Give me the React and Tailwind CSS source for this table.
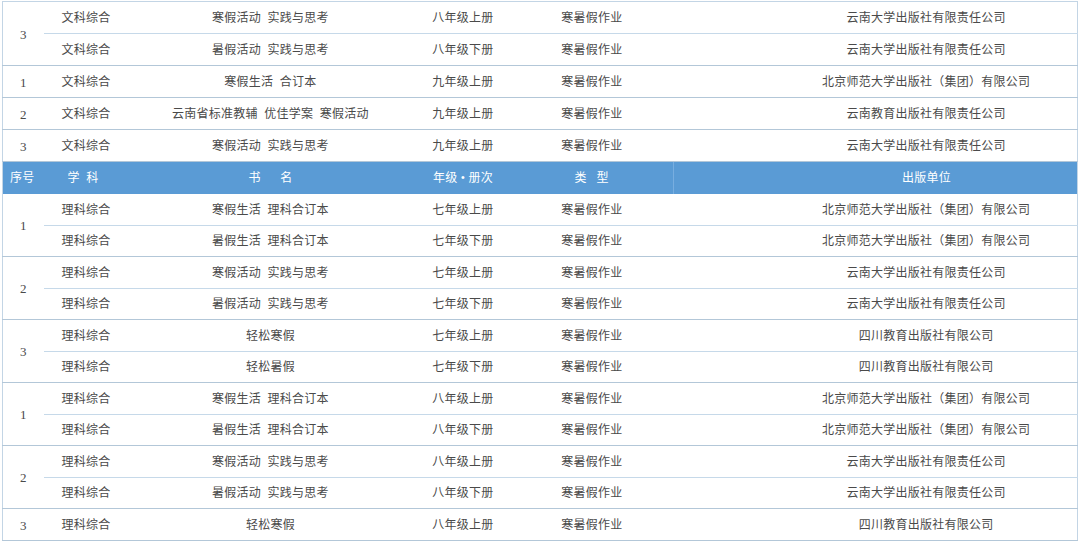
import React from "react";

const top = [
  { no: "3", rows: [
    ["文科综合", "寒假活动  实践与思考", "八年级上册", "寒暑假作业", "云南大学出版社有限责任公司"],
    ["文科综合", "暑假活动  实践与思考", "八年级下册", "寒暑假作业", "云南大学出版社有限责任公司"],
  ]},
  { no: "1", rows: [["文科综合", "寒假生活  合订本", "九年级上册", "寒暑假作业", "北京师范大学出版社（集团）有限公司"]] },
  { no: "2", rows: [["文科综合", "云南省标准教辅  优佳学案  寒假活动", "九年级上册", "寒暑假作业", "云南教育出版社有限责任公司"]] },
  { no: "3", rows: [["文科综合", "寒假活动  实践与思考", "九年级上册", "寒暑假作业", "云南大学出版社有限责任公司"]] },
];

const bottom = [
  { no: "1", rows: [
    ["理科综合", "寒假生活  理科合订本", "七年级上册", "寒暑假作业", "北京师范大学出版社（集团）有限公司"],
    ["理科综合", "暑假生活  理科合订本", "七年级下册", "寒暑假作业", "北京师范大学出版社（集团）有限公司"],
  ]},
  { no: "2", rows: [
    ["理科综合", "寒假活动  实践与思考", "七年级上册", "寒暑假作业", "云南大学出版社有限责任公司"],
    ["理科综合", "暑假活动  实践与思考", "七年级下册", "寒暑假作业", "云南大学出版社有限责任公司"],
  ]},
  { no: "3", rows: [
    ["理科综合", "轻松寒假", "七年级上册", "寒暑假作业", "四川教育出版社有限公司"],
    ["理科综合", "轻松暑假", "七年级下册", "寒暑假作业", "四川教育出版社有限公司"],
  ]},
  { no: "1", rows: [
    ["理科综合", "寒假生活  理科合订本", "八年级上册", "寒暑假作业", "北京师范大学出版社（集团）有限公司"],
    ["理科综合", "暑假生活  理科合订本", "八年级下册", "寒暑假作业", "北京师范大学出版社（集团）有限公司"],
  ]},
  { no: "2", rows: [
    ["理科综合", "寒假活动  实践与思考", "八年级上册", "寒暑假作业", "云南大学出版社有限责任公司"],
    ["理科综合", "暑假活动  实践与思考", "八年级下册", "寒暑假作业", "云南大学出版社有限责任公司"],
  ]},
  { no: "3", rows: [["理科综合", "轻松寒假", "八年级上册", "寒暑假作业", "四川教育出版社有限公司"]] },
];

const font = { fontFamily: '"Liberation Serif", "Noto Sans CJK SC", serif' };

function Group({ group, h }) {
  return group.rows.map((r, i) => {
    const last = i === group.rows.length - 1;
    const line = last ? "border-b border-[#b3c7d8]" : "border-b border-[#c6d9e9]";
    return (
      <tr key={i} className={h}>
        {i === 0 && (
          <td rowSpan={group.rows.length} className="border-b border-[#b3c7d8] text-center text-[13px] pt-[2px]">
            {group.no}
          </td>
        )}
        <td className={`${line} pl-[18px] text-left pt-[1px]`}>{r[0]}</td>
        <td className={`${line} text-center whitespace-pre pt-[1px]`}>{r[1]}</td>
        <td className={`${line} text-center pt-[1px]`}>{r[2]}</td>
        <td className={`${line} text-center pt-[1px]`}>{r[3]}</td>
        <td className={`${line} text-center pl-[102px] pt-[1px]`}>{r[4]}</td>
      </tr>
    );
  });
}

export default function App() {
  return (
    <div className="w-[1080px] h-[542px] bg-white pl-[2px] pt-[1px] overflow-hidden">
      <table
        style={font}
        className="w-[1076px] table-fixed border-collapse border border-[#c3d5e5] text-[12px] tracking-[0.25px] text-[#4a4a4a]"
      >
        <colgroup>
          <col className="w-[41px]" />
          <col className="w-[82px]" />
          <col className="w-[290px]" />
          <col className="w-[95px]" />
          <col className="w-[163px]" />
          <col />
        </colgroup>
        <tbody>
          {top.map((g, i) => (
            <Group key={"t" + i} group={g} h="h-[32px]" />
          ))}
          <tr className="h-[32px] bg-[#5a9bd5] text-white">
            <td className="pl-[7px] text-left">序号</td>
            <td className="pl-[24px] text-left whitespace-pre">学  科</td>
            <td className="text-center whitespace-pre">书      名</td>
            <td className="text-center">年级 • 册次</td>
            <td className="text-center whitespace-pre">类   型</td>
            <td className="text-center pl-[102px] border-l border-[#78aee0]">出版单位</td>
          </tr>
          {bottom.map((g, i) => (
            <Group key={"b" + i} group={g} h="h-[31.5px]" />
          ))}
        </tbody>
      </table>
    </div>
  );
}
